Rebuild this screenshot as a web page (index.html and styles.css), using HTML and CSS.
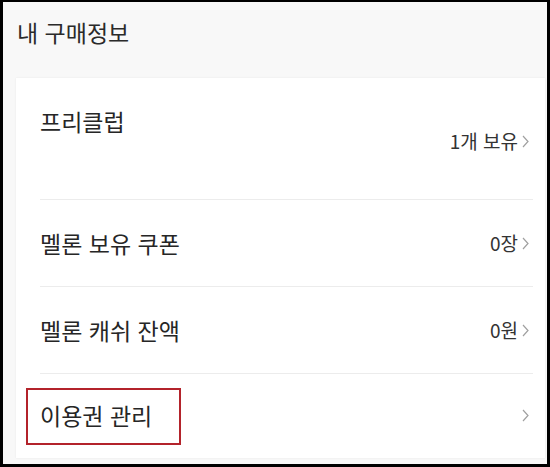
FILE: index.html
```html
<!DOCTYPE html>
<html lang="ko">
<head>
<meta charset="utf-8">
<link rel="stylesheet" href="styles.css">
</head>
<body>
<div class="frame">
  <div class="screen">
    <header class="header">
      <h1 class="title">내 구매정보</h1>
    </header>
    <div class="card">
      <div class="row row-top">
        <span class="label">프리클럽</span>
        <span class="value">1개 보유<svg class="chev" width="7" height="13" viewBox="0 0 7 13"><polyline points="1,1 6,6.5 1,12" fill="none" stroke="#a0a0a0" stroke-width="1.2"/></svg></span>
      </div>
      <div class="row">
        <span class="label">멜론 보유 쿠폰</span>
        <span class="value">0장<svg class="chev" width="7" height="13" viewBox="0 0 7 13"><polyline points="1,1 6,6.5 1,12" fill="none" stroke="#a0a0a0" stroke-width="1.2"/></svg></span>
      </div>
      <div class="row">
        <span class="label">멜론 캐쉬 잔액</span>
        <span class="value">0원<svg class="chev" width="7" height="13" viewBox="0 0 7 13"><polyline points="1,1 6,6.5 1,12" fill="none" stroke="#a0a0a0" stroke-width="1.2"/></svg></span>
      </div>
      <div class="row row-last">
        <span class="label">이용권 관리</span>
        <span class="value"><svg class="chev" width="7" height="13" viewBox="0 0 7 13"><polyline points="1,1 6,6.5 1,12" fill="none" stroke="#a0a0a0" stroke-width="1.2"/></svg></span>
        <span class="highlight"></span>
      </div>
    </div>
  </div>
</div>
</body>
</html>
```
FILE: styles.css
```css
* { box-sizing: border-box; }
html, body { margin: 0; padding: 0; }
body {
  width: 550px;
  height: 467px;
  background: #000;
  font-family: "Noto Sans CJK KR", "Noto Sans", sans-serif;
  overflow: hidden;
}
.frame {
  width: 550px;
  height: 467px;
  padding: 2px 3px 3px 3px;
  background: #000;
}
.screen {
  height: 100%;
  background: #f8f8f8;
  display: flex;
  flex-direction: column;
}
.header {
  height: 76px;
  padding: 15px 0 0 14px;
  flex: none;
}
.title {
  margin: 0;
  font-size: 23px;
  line-height: 30px;
  font-weight: 400;
  color: #2a2a2a;
}
.card {
  flex: 1;
  margin: 0 2px 6px 13px;
  background: #fff;
  box-shadow: 0 0 2px rgba(0,0,0,0.07);
  padding: 0 12px 0 24px;
  display: flex;
  flex-direction: column;
}
.row {
  position: relative;
  height: 87px;
  border-bottom: 1px solid #ececec;
  display: flex;
  align-items: center;
  justify-content: space-between;
  padding-right: 4px;
  flex: none;
}
.row-top {
  height: 122px;
  align-items: flex-start;
}
.row-top .label { margin-top: 28px; }
.row-top .value { margin-top: 51px; }
.row-last {
  border-bottom: none;
  height: 82px;
}
.label {
  font-size: 23px;
  line-height: 30px;
  color: #262626;
}
.value {
  display: flex;
  align-items: center;
  font-size: 19px;
  line-height: 24px;
  color: #333;
}
.chev {
  margin-left: 4px;
  display: block;
}
.highlight {
  position: absolute;
  left: -14px;
  top: 14px;
  width: 155px;
  height: 57px;
  border: 2px solid #b3232b;
}
```
